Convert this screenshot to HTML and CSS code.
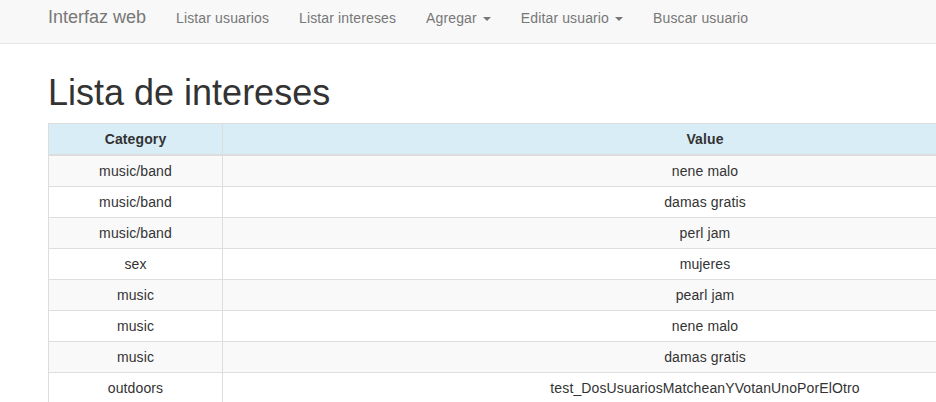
FILE: index.html
```html
<!DOCTYPE html>
<html lang="es">
<head>
<meta charset="utf-8">
<title>Lista de intereses</title>
<link rel="stylesheet" href="styles.css">
</head>
<body>
<nav class="navbar">
  <div class="container nav-inner">
    <a class="brand" href="#">Interfaz web</a>
    <ul class="nav">
      <li><a href="#">Listar usuarios</a></li>
      <li><a href="#">Listar intereses</a></li>
      <li><a href="#">Agregar <span class="caret"></span></a></li>
      <li><a href="#">Editar usuario <span class="caret"></span></a></li>
      <li><a href="#">Buscar usuario</a></li>
    </ul>
  </div>
</nav>
<main class="container page">
  <h1 class="title">Lista de intereses</h1>
  <table class="table">
    <thead>
      <tr><th class="col-cat">Category</th><th>Value</th></tr>
    </thead>
    <tbody>
      <tr><td>music/band</td><td>nene malo</td></tr>
      <tr><td>music/band</td><td>damas gratis</td></tr>
      <tr><td>music/band</td><td>perl jam</td></tr>
      <tr><td>sex</td><td>mujeres</td></tr>
      <tr><td>music</td><td>pearl jam</td></tr>
      <tr><td>music</td><td>nene malo</td></tr>
      <tr><td>music</td><td>damas gratis</td></tr>
      <tr><td>outdoors</td><td>test_DosUsuariosMatcheanYVotanUnoPorElOtro</td></tr>
    </tbody>
  </table>
</main>
</body>
</html>
```
FILE: styles.css
```css
html, body {
  margin: 0;
  padding: 0;
  overflow: hidden;
}
body {
  font-family: "Liberation Sans", Arial, sans-serif;
  font-size: 14px;
  line-height: 20px;
  color: #333;
  background: #fff;
  width: 1240px;
}
.container {
  width: 1140px;
  padding: 0 15px;
  margin-left: 33px;
}
.navbar {
  background: #f8f8f8;
  border-bottom: 1px solid #e7e7e7;
  height: 43px;
}
.nav-inner {
  display: flex;
  align-items: flex-start;
}
.brand {
  display: block;
  font-size: 18px;
  line-height: 20px;
  padding: 7px 15px 0 15px;
  margin-left: -15px;
  color: #777;
  text-decoration: none;
}
.nav {
  display: flex;
  list-style: none;
  margin: 0;
  padding: 0;
}
.nav a {
  display: block;
  padding: 8px 15px 0;
  line-height: 20px;
  letter-spacing: 0.13px;
  color: #777;
  text-decoration: none;
}
.caret {
  display: inline-block;
  width: 0;
  height: 0;
  margin-left: 2px;
  vertical-align: middle;
  border-top: 4px solid #777;
  border-left: 4px solid transparent;
  border-right: 4px solid transparent;
}
.page {
  padding-top: 9px;
}
.title {
  font-family: "Liberation Sans", Arial, sans-serif;
  font-size: 36px;
  font-weight: 500;
  line-height: 1.1;
  margin: 20px 0 10px;
  color: #333;
}
.table {
  width: 100%;
  border-collapse: collapse;
  border: 1px solid #ddd;
}
.table th,
.table td {
  padding: 5px;
  line-height: 20px;
  text-align: center;
  letter-spacing: 0.12px;
  border: 1px solid #ddd;
}
.table th {
  font-weight: bold;
  background: #d9edf7;
  border-bottom: 2px solid #ddd;
}
.table .col-cat {
  width: 163px;
}
.table tbody tr:nth-child(odd) td {
  background: #f9f9f9;
}
```
